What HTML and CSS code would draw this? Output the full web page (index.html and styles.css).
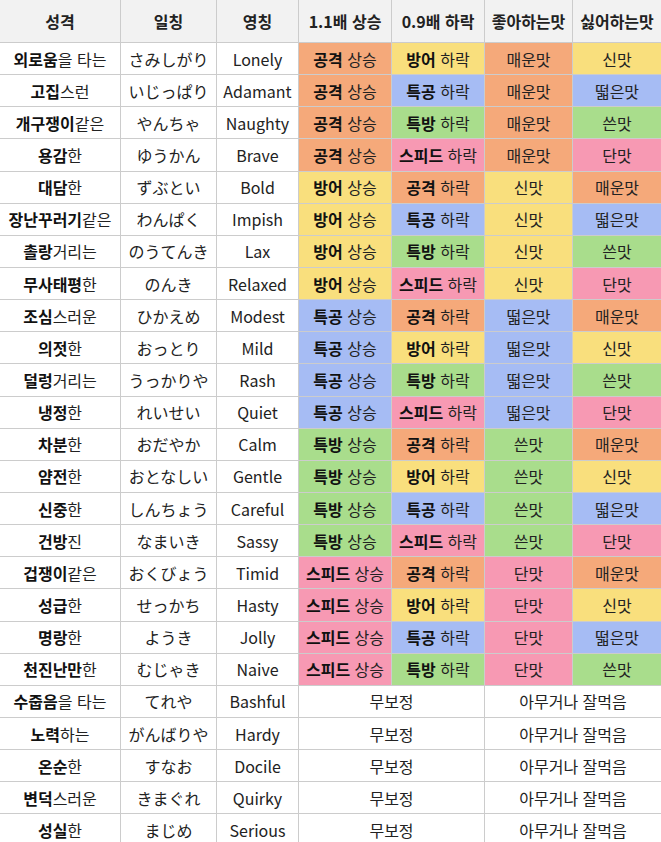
FILE: index.html
```html
<!DOCTYPE html>
<html lang="ko">
<head>
<meta charset="utf-8">
<link rel="stylesheet" href="styles.css">
</head>
<body>
<table class="natures">
<colgroup>
<col class="c1"><col class="c2"><col class="c3"><col class="c4"><col class="c5"><col class="c6"><col class="c7">
</colgroup>
<thead>
<tr><th>성격</th><th>일칭</th><th>영칭</th><th>1.1배 상승</th><th>0.9배 하락</th><th>좋아하는맛</th><th>싫어하는맛</th></tr>
</thead>
<tbody>
<tr><td><b>외로움</b>을 타는</td><td>さみしがり</td><td>Lonely</td><td class="atk"><b>공격</b> 상승</td><td class="def"><b>방어</b> 하락</td><td class="atk">매운맛</td><td class="def">신맛</td></tr>
<tr><td><b>고집</b>스런</td><td>いじっぱり</td><td>Adamant</td><td class="atk"><b>공격</b> 상승</td><td class="spa"><b>특공</b> 하락</td><td class="atk">매운맛</td><td class="spa">떫은맛</td></tr>
<tr><td><b>개구쟁이</b>같은</td><td>やんちゃ</td><td>Naughty</td><td class="atk"><b>공격</b> 상승</td><td class="spd"><b>특방</b> 하락</td><td class="atk">매운맛</td><td class="spd">쓴맛</td></tr>
<tr><td><b>용감</b>한</td><td>ゆうかん</td><td>Brave</td><td class="atk"><b>공격</b> 상승</td><td class="spe"><b>스피드</b> 하락</td><td class="atk">매운맛</td><td class="spe">단맛</td></tr>
<tr><td><b>대담</b>한</td><td>ずぶとい</td><td>Bold</td><td class="def"><b>방어</b> 상승</td><td class="atk"><b>공격</b> 하락</td><td class="def">신맛</td><td class="atk">매운맛</td></tr>
<tr><td><b>장난꾸러기</b>같은</td><td>わんぱく</td><td>Impish</td><td class="def"><b>방어</b> 상승</td><td class="spa"><b>특공</b> 하락</td><td class="def">신맛</td><td class="spa">떫은맛</td></tr>
<tr><td><b>촐랑</b>거리는</td><td>のうてんき</td><td>Lax</td><td class="def"><b>방어</b> 상승</td><td class="spd"><b>특방</b> 하락</td><td class="def">신맛</td><td class="spd">쓴맛</td></tr>
<tr><td><b>무사태평</b>한</td><td>のんき</td><td>Relaxed</td><td class="def"><b>방어</b> 상승</td><td class="spe"><b>스피드</b> 하락</td><td class="def">신맛</td><td class="spe">단맛</td></tr>
<tr><td><b>조심</b>스러운</td><td>ひかえめ</td><td>Modest</td><td class="spa"><b>특공</b> 상승</td><td class="atk"><b>공격</b> 하락</td><td class="spa">떫은맛</td><td class="atk">매운맛</td></tr>
<tr><td><b>의젓</b>한</td><td>おっとり</td><td>Mild</td><td class="spa"><b>특공</b> 상승</td><td class="def"><b>방어</b> 하락</td><td class="spa">떫은맛</td><td class="def">신맛</td></tr>
<tr><td><b>덜렁</b>거리는</td><td>うっかりや</td><td>Rash</td><td class="spa"><b>특공</b> 상승</td><td class="spd"><b>특방</b> 하락</td><td class="spa">떫은맛</td><td class="spd">쓴맛</td></tr>
<tr><td><b>냉정</b>한</td><td>れいせい</td><td>Quiet</td><td class="spa"><b>특공</b> 상승</td><td class="spe"><b>스피드</b> 하락</td><td class="spa">떫은맛</td><td class="spe">단맛</td></tr>
<tr><td><b>차분</b>한</td><td>おだやか</td><td>Calm</td><td class="spd"><b>특방</b> 상승</td><td class="atk"><b>공격</b> 하락</td><td class="spd">쓴맛</td><td class="atk">매운맛</td></tr>
<tr><td><b>얌전</b>한</td><td>おとなしい</td><td>Gentle</td><td class="spd"><b>특방</b> 상승</td><td class="def"><b>방어</b> 하락</td><td class="spd">쓴맛</td><td class="def">신맛</td></tr>
<tr><td><b>신중</b>한</td><td>しんちょう</td><td>Careful</td><td class="spd"><b>특방</b> 상승</td><td class="spa"><b>특공</b> 하락</td><td class="spd">쓴맛</td><td class="spa">떫은맛</td></tr>
<tr><td><b>건방</b>진</td><td>なまいき</td><td>Sassy</td><td class="spd"><b>특방</b> 상승</td><td class="spe"><b>스피드</b> 하락</td><td class="spd">쓴맛</td><td class="spe">단맛</td></tr>
<tr><td><b>겁쟁이</b>같은</td><td>おくびょう</td><td>Timid</td><td class="spe"><b>스피드</b> 상승</td><td class="atk"><b>공격</b> 하락</td><td class="spe">단맛</td><td class="atk">매운맛</td></tr>
<tr><td><b>성급</b>한</td><td>せっかち</td><td>Hasty</td><td class="spe"><b>스피드</b> 상승</td><td class="def"><b>방어</b> 하락</td><td class="spe">단맛</td><td class="def">신맛</td></tr>
<tr><td><b>명랑</b>한</td><td>ようき</td><td>Jolly</td><td class="spe"><b>스피드</b> 상승</td><td class="spa"><b>특공</b> 하락</td><td class="spe">단맛</td><td class="spa">떫은맛</td></tr>
<tr><td><b>천진난만</b>한</td><td>むじゃき</td><td>Naive</td><td class="spe"><b>스피드</b> 상승</td><td class="spd"><b>특방</b> 하락</td><td class="spe">단맛</td><td class="spd">쓴맛</td></tr>
<tr><td><b>수줍음</b>을 타는</td><td>てれや</td><td>Bashful</td><td colspan="2">무보정</td><td colspan="2">아무거나 잘먹음</td></tr>
<tr><td><b>노력</b>하는</td><td>がんばりや</td><td>Hardy</td><td colspan="2">무보정</td><td colspan="2">아무거나 잘먹음</td></tr>
<tr><td><b>온순</b>한</td><td>すなお</td><td>Docile</td><td colspan="2">무보정</td><td colspan="2">아무거나 잘먹음</td></tr>
<tr><td><b>변덕</b>스러운</td><td>きまぐれ</td><td>Quirky</td><td colspan="2">무보정</td><td colspan="2">아무거나 잘먹음</td></tr>
<tr><td><b>성실</b>한</td><td>まじめ</td><td>Serious</td><td colspan="2">무보정</td><td colspan="2">아무거나 잘먹음</td></tr>
</tbody>
</table>
</body>
</html>
```

FILE: styles.css
```css
html, body {
  margin: 0;
  padding: 0;
  background: #ffffff;
}

body {
  font-family: "Noto Sans CJK KR", "Noto Sans", sans-serif;
  font-size: 16px;
  color: #222222;
}

.natures {
  border-collapse: collapse;
  table-layout: fixed;
  width: 662px;
  margin: -1px 0 0 -1px;
}

.c1 { width: 121px; }
.c2 { width: 96px; }
.c3 { width: 82px; }
.c4 { width: 93px; }
.c5 { width: 93px; }
.c6 { width: 88px; }
.c7 { width: 89px; }

.natures th,
.natures td {
  border: 1px solid #cccccc;
  text-align: center;
  vertical-align: middle;
  padding: 0;
  white-space: nowrap;
  overflow: hidden;
}

.natures th {
  height: 42px;
  background: #f2f2f2;
  font-weight: 700;
  color: #222222;
}

.natures td {
  height: 31.15px;
  line-height: 20px;
}

.natures b {
  font-weight: 700;
  color: #111111;
}

.atk { background: #f5a97a; }
.def { background: #f9df7d; }
.spa { background: #a6bcf4; }
.spd { background: #a9dd8c; }
.spe { background: #f799b3; }
```
